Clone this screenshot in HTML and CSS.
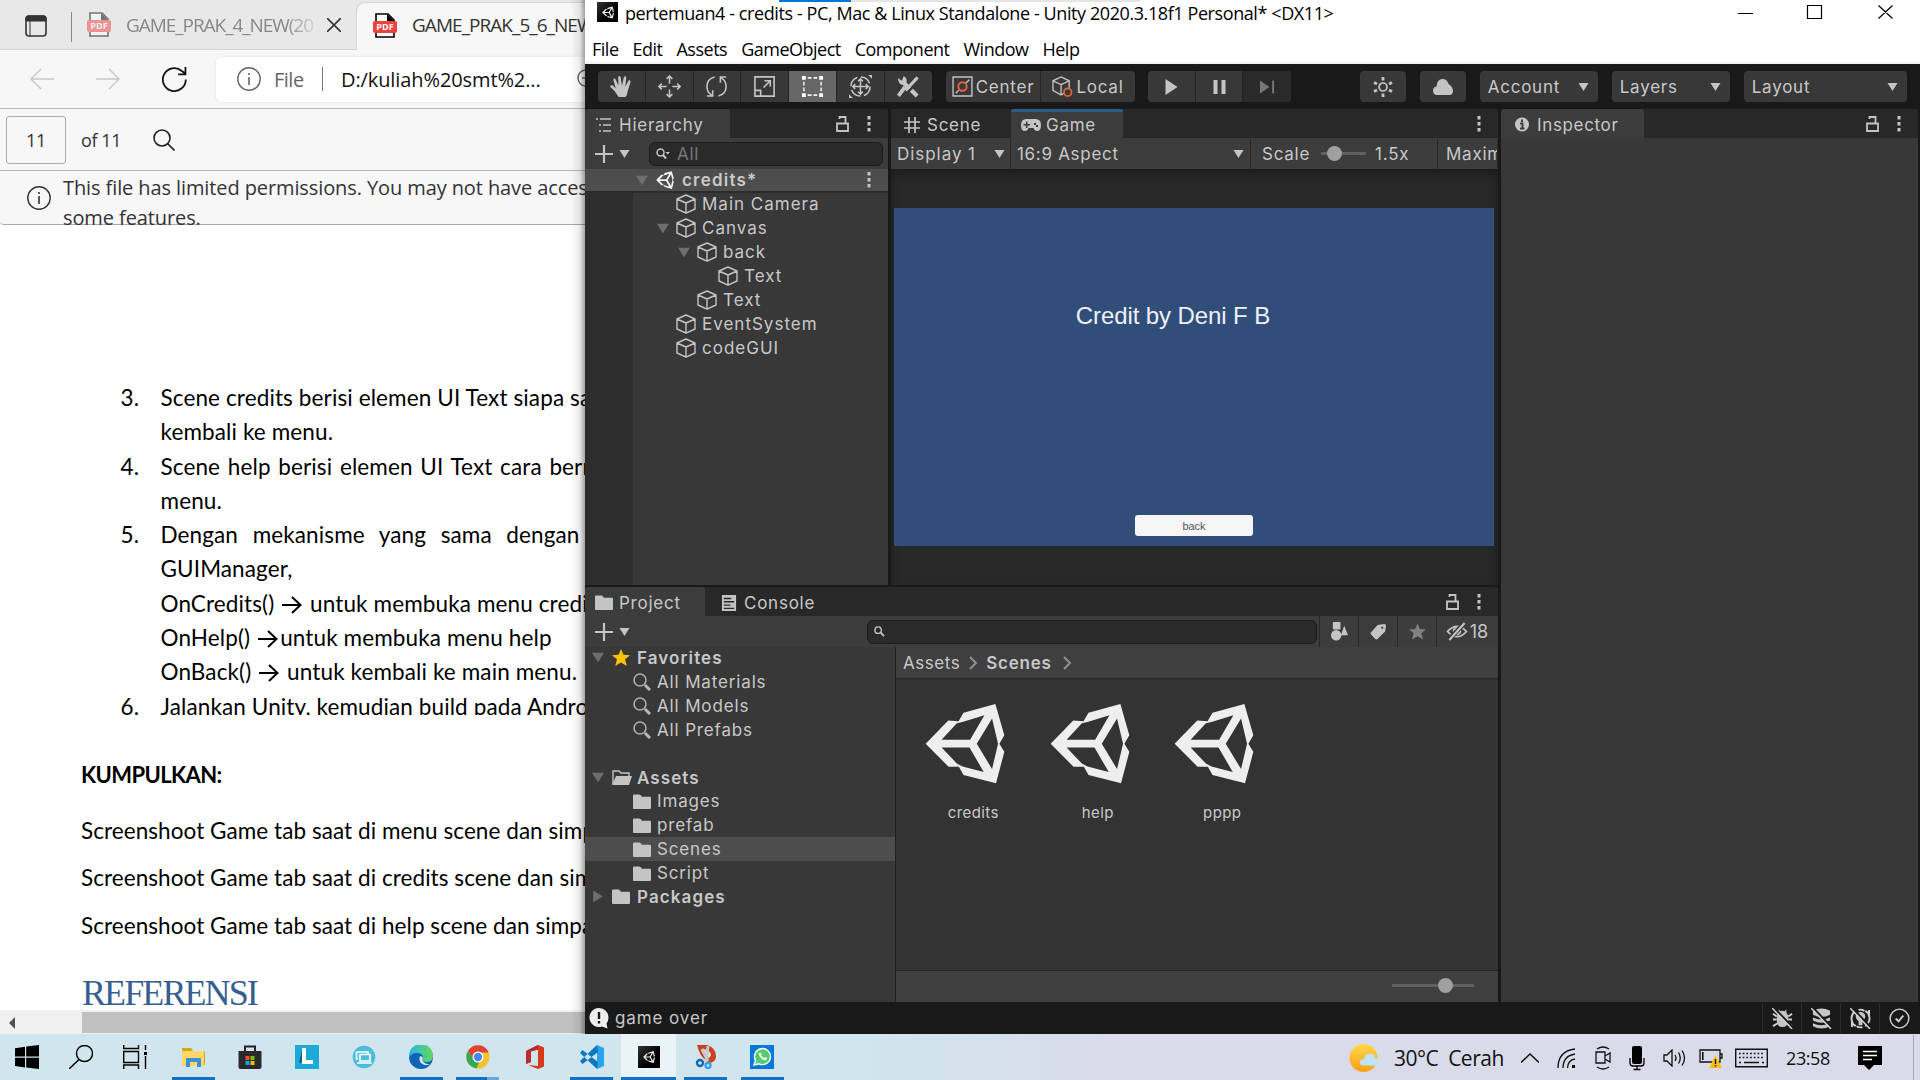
FILE: index.html
```html
<!DOCTYPE html>
<html lang="en">
<head>
<meta charset="utf-8">
<title>pertemuan4 - credits - Unity</title>
<link rel="stylesheet" href="styles.css">
</head>
<body>
<svg class="defs" width="0" height="0">
  <symbol id="unity" viewBox="1036 370 241 242"><path fill-rule="evenodd" d="M1038 492L1106 422L1137 424L1152 398L1248 372L1275 466L1260 492L1275 516L1250 611L1152 586L1138 561L1107 561ZM1086 480H1172L1215 406L1149 426L1132 430ZM1086 503H1170L1213 577L1149 560L1132 551ZM1192 492L1238 416L1256 492L1238 568Z"/></symbol>
  <symbol id="cube" viewBox="0 0 20 20"><path d="M10 1L19 5V15L10 19.2L1 15V5ZM1 5L10 9L19 5M10 9V19" fill="none" stroke="#c4c4c4" stroke-width="1.4" stroke-linejoin="round"/></symbol>
  <symbol id="folder" viewBox="0 0 18 15"><path d="M0 1.5Q0 .5 1 .5H7L9 2.8H17Q18 2.8 18 4V14Q18 15 17 15H1Q0 15 0 14Z"/></symbol>
  <symbol id="tri" viewBox="0 0 10 8"><path d="M0 0H10L5 8Z"/></symbol>
  <symbol id="lock" viewBox="0 0 13 16"><path d="M1 7.5H12V15H1ZM3.5 3V1H9.5V7.5" fill="none" stroke="#c4c4c4" stroke-width="1.8"/></symbol>
  <symbol id="dots" viewBox="0 0 4 16"><path d="M.5 0H3.5V3.5H.5ZM.5 6H3.5V9.5H.5ZM.5 12H3.5V15.5H.5Z"/></symbol>
  <symbol id="mag" viewBox="0 0 18 18"><circle cx="7" cy="7" r="6" fill="none" stroke="#b0b0b0" stroke-width="1.5"/><path d="M12 12L17 17" stroke="#b8b8b8" stroke-width="3"/></symbol>
  <symbol id="pdf" viewBox="0 0 24 25"><path d="M3 1H15L21 7V24H3Z" fill="#fff" stroke="#000" stroke-width="1.6"/><path d="M14 1L21 8H14Z" fill="#000"/><rect x="0" y="8" width="24" height="12" rx="2" fill="#f04040"/><text x="12" y="17.3" font-size="9" font-weight="700" fill="#fff" text-anchor="middle" letter-spacing="0">PDF</text></symbol>
  <symbol id="info" viewBox="0 0 24 24"><circle cx="12" cy="12" r="11.2" fill="none" stroke="currentColor" stroke-width="1.4"/><path d="M12 10V18M12 6V8" stroke="currentColor" stroke-width="1.6"/></symbol>
  <symbol id="crumb" viewBox="0 0 9 14"><path d="M1 1L7 7L1 13" fill="none" stroke="#8f8f8f" stroke-width="2"/></symbol>
</svg>

<div class="desktop">
<section class="browser">
  <header class="tabs">
    <svg class="tab-menu" viewBox="0 0 22 22"><rect x="1" y="1" width="20" height="20" rx="3" fill="none" stroke="#333" stroke-width="1.6"/><path d="M1 3Q1 1 3 1H19Q21 1 21 3V6H1ZM5 6V21" fill="#333" stroke="#333"/></svg>
    <i class="tab-rule"></i>
    <div class="tab idle"><svg class="pdf faded"><use href="#pdf"/></svg><span class="tab-name">GAME_PRAK_4_NEW(20</span>
      <svg class="close" viewBox="0 0 14 14"><path d="M0 0L14 14M14 0L0 14" stroke="#333" stroke-width="1.6"/></svg></div>
    <div class="tab open"><svg class="pdf"><use href="#pdf"/></svg><span>GAME_PRAK_5_6_NEW</span></div>
  </header>
  <div class="nav">
    <svg class="arrow" viewBox="0 0 24 22"><path d="M24 11H1M11 1L1 11L11 21" fill="none" stroke="#c8c8c8" stroke-width="1.5"/></svg>
    <svg class="arrow fwd" viewBox="0 0 24 22"><path d="M0 11H23M13 1L23 11L13 21" fill="none" stroke="#c8c8c8" stroke-width="1.5"/></svg>
    <svg class="reload" viewBox="0 0 24 24"><path d="M22.8 12A11 11 0 1 1 19 3.8L22 6M22.5 0V7H15.5" fill="none" stroke="#111" stroke-width="1.7"/></svg>
    <div class="url"><svg class="info grey"><use href="#info"/></svg><span class="scheme">File</span><i></i><span class="path">D:/kuliah%20smt%2...</span>
      <svg class="zoomer" viewBox="0 0 20 20"><circle cx="9" cy="9" r="8" fill="none" stroke="#666" stroke-width="1.5"/><path d="M5 9H13" stroke="#666" stroke-width="1.5"/></svg></div>
  </div>
  <div class="pdfbar"><span class="page">11</span><span class="of">of 11</span>
    <svg class="find" viewBox="0 0 22 22"><circle cx="9" cy="9" r="8" fill="none" stroke="#222" stroke-width="1.6"/><path d="M14.5 14.5L21.5 21.5" stroke="#222" stroke-width="1.7"/></svg></div>
  <div class="notice"><svg class="info"><use href="#info"/></svg><p>This file has limited permissions. You may not have access<br>some features.</p></div>
  <article class="doc">
    <div class="list">
      <div class="li"><b>3.</b><span class="l1">Scene credits berisi elemen UI Text siapa saja</span></div>
      <div class="li"><b></b><span>kembali ke menu.</span></div>
      <div class="li"><b>4.</b><span class="l4">Scene help berisi elemen UI Text cara bermain</span></div>
      <div class="li"><b></b><span>menu.</span></div>
      <div class="li"><b>5.</b><span class="l5">Dengan mekanisme yang sama dengan</span></div>
      <div class="li"><b></b><span>GUIManager,</span></div>
      <div class="li"><b></b><span>OnCredits() <svg class="to" viewBox="0 0 20 18"><path d="M0 9H18M10 1L18.5 9L10 17" fill="none" stroke="#000" stroke-width="2"/></svg> untuk membuka menu credits</span></div>
      <div class="li"><b></b><span>OnHelp() <svg class="to" viewBox="0 0 20 18"><path d="M0 9H18M10 1L18.5 9L10 17" fill="none" stroke="#000" stroke-width="2"/></svg>untuk membuka menu help</span></div>
      <div class="li"><b></b><span>OnBack() <svg class="to" viewBox="0 0 20 18"><path d="M0 9H18M10 1L18.5 9L10 17" fill="none" stroke="#000" stroke-width="2"/></svg> untuk kembali ke main menu.</span></div>
      <div class="li"><b>6.</b><span>Jalankan Unity, kemudian build pada Android</span></div>
    </div>
    <h3>KUMPULKAN:</h3>
    <p>Screenshoot Game tab saat di menu scene dan simpan</p>
    <p>Screenshoot Game tab saat di credits scene dan simpan</p>
    <p>Screenshoot Game tab saat di help scene dan simpan</p>
    <h2>REFERENSI</h2>
  </article>
  <div class="hscroll"><svg viewBox="0 0 6 12"><path d="M6 0V12L0 6Z" fill="#505050"/></svg><i></i></div>
  <div class="shade"></div>
</section>

<section class="editor">
  <header class="titlebar">
    <div class="peek"><i></i><b></b></div>
    <div class="title"><span class="app"><svg><use href="#unity"/></svg></span><span class="name">pertemuan4 - credits - PC, Mac &amp; Linux Standalone - Unity 2020.3.18f1 Personal* &lt;DX11&gt;</span>
      <svg class="win" viewBox="0 0 155 14"><path d="M0 8.5H15M69.500 .5H83.500V13.500H69.500ZM140.500 .5L154.500 13.500M154.500 .5L140.500 13.500" fill="none" stroke="#000" stroke-width="1.2"/></svg></div>
    <nav class="menu"><span>File</span><span>Edit</span><span>Assets</span><span>GameObject</span><span>Component</span><span>Window</span><span>Help</span></nav>
  </header>

  <div class="toolbar">
    <div class="group tools">
      <span><svg viewBox="0 0 24 24"><path d="M9 23L5 17L0 12Q1 10 3 11L6 14L3.500 5Q4 3 5.500 4L8.800 11L8.500 2Q10 0 11 2L12.500 11L14.500 2Q16 .5 17 2.500L16 12L19.500 5.500Q21.500 5 21.500 7L18.500 17Q18 21 16 23Z" fill="#c4c4c4"/></svg></span>
      <span><svg viewBox="0 0 24 24"><path d="M12 1V9M12 15V23M1 12H9M15 12H23M9 4L12 1L15 4M9 20L12 23L15 20M4 9L1 12L4 15M20 9L23 12L20 15" fill="none" stroke="#c4c4c4" stroke-width="1.6"/></svg></span>
      <span><svg viewBox="0 0 24 24"><path d="M10 2Q2 4 2 12Q2 18 7 21M2 22H8V16M14 22Q22 20 22 12Q22 6 17 3M22 2H16V8" fill="none" stroke="#c4c4c4" stroke-width="1.6"/></svg></span>
      <span><svg viewBox="0 0 24 24"><path d="M2 2H22V22H2ZM2 16H8V22M11 13L18 6M12 6H18V12" fill="none" stroke="#c4c4c4" stroke-width="1.7"/></svg></span>
      <span class="on"><svg viewBox="0 0 24 24"><path d="M3 7V17M21 7V17M7 3H17M7 21H17" stroke="#f0f0f0" stroke-width="1.6" stroke-dasharray="4 2"/><path d="M1 1H5V5H1ZM19 1H23V5H19ZM1 19H5V23H1ZM19 19H23V23H19Z" fill="#fff"/></svg></span>
      <span><svg viewBox="0 0 24 24"><circle cx="12" cy="12" r="10" fill="none" stroke="#c4c4c4" stroke-width="1.6" stroke-dasharray="12 3.700"/><path d="M12 4V20M4 12H20M9.500 6.500L12 4L14.500 6.500M9.500 17.500L12 20L14.500 17.500M6.500 9.500L4 12L6.500 14.500M17.500 9.500L20 12L17.500 14.500" fill="none" stroke="#c4c4c4" stroke-width="1.6"/><path d="M20 0H24V4ZM0 20V24H4Z" fill="#c4c4c4"/></svg></span>
      <span><svg viewBox="0 0 24 24"><path d="M7 8L13 14M15 16L21 22" stroke="#c4c4c4" stroke-width="4.500"/><path d="M21.500 2.500L9 16" stroke="#c4c4c4" stroke-width="3.200"/><path d="M10.500 13L3 23L0 20.500L6.500 11.500Z" fill="#c4c4c4"/><path d="M1 3L5 6L7 1Q11 3 10 8Q7 12 3 9Q1 7 1 3Z" fill="#c4c4c4"/></svg></span>
    </div>
    <div class="group pivot">
      <span><svg viewBox="0 0 20 20"><path d="M1 1H19V19H1ZM3.500 16.500L6.500 13.500M13 7L16.500 3.500" fill="none" stroke="#c4c4c4" stroke-width="1.300"/><circle cx="10" cy="10" r="4" fill="none" stroke="#e8633e" stroke-width="1.800"/></svg>Center</span>
      <span><svg class="wide" viewBox="0 0 22 22"><path d="M9.500 1L18 5V15L9.500 20L1 15V5ZM1 5L9.500 9L18 5M9.500 9V20" fill="none" stroke="#c4c4c4" stroke-width="1.400"/><circle cx="16.500" cy="17" r="4" fill="#383838" stroke="#e8633e" stroke-width="1.800"/></svg>Local</span>
    </div>
    <div class="group play">
      <span><svg viewBox="0 0 14 16"><path d="M1 0L13 8L1 16Z" fill="#c4c4c4"/></svg></span>
      <span><svg viewBox="0 0 14 16"><path d="M1 1H5V15H1ZM9 1H13V15H9Z" fill="#c4c4c4"/></svg></span>
      <span class="off"><svg viewBox="0 0 16 16"><path d="M0 1L10 8L0 15ZM13 1H15V15H13Z" fill="#777"/></svg></span>
    </div>
    <div class="group one cog"><svg viewBox="0 0 20 20"><circle cx="10" cy="10" r="4" fill="none" stroke="#c4c4c4" stroke-width="1.700"/><path d="M10 0V3.500M10 16.500V20M1 5.500L4 7M19 5.500L16 7M1 14.500L4 13M19 14.500L16 13" stroke="#c4c4c4" stroke-width="2.800"/></svg></div>
    <div class="group one"><svg viewBox="0 0 20 16"><path d="M3 16Q0 15 0 11.500Q0 8 3.500 7.500Q4 0 9.500 0Q14 0 15.500 5Q20 8 20 12Q20 15 17 16Z" fill="#c4c4c4"/></svg></div>
    <div class="group drop">Account<svg><use href="#tri"/></svg></div>
    <div class="group drop">Layers<svg><use href="#tri"/></svg></div>
    <div class="group drop layout">Layout<svg><use href="#tri"/></svg></div>
  </div>

  <div class="work">
    <div class="left">
      <div class="upper">
        <section class="hierarchy panel">
          <div class="bar"><span class="ptab h"><svg class="ic16" viewBox="0 0 16 16"><path d="M0 2H2M4 2H15M3 8H5M7 8H15M3 14H5M7 14H15" stroke="#c4c4c4" stroke-width="1.600"/></svg>Hierarchy</span><svg class="lock"><use href="#lock"/></svg><svg class="dots"><use href="#dots"/></svg></div>
          <div class="sub"><svg class="plus" viewBox="0 0 18 18"><path d="M9 0V18M0 9H18" stroke="#c4c4c4" stroke-width="2.200"/></svg><svg class="tri"><use href="#tri"/></svg>
            <div class="search"><svg viewBox="0 0 14 12"><circle cx="4.500" cy="4.500" r="3.500" fill="none" stroke="#c4c4c4" stroke-width="1.500"/><path d="M7 7L10 10.500" stroke="#c4c4c4" stroke-width="2"/><path d="M9.500 4H14L11.700 6.500Z" fill="#c4c4c4"/></svg>All</div></div>
          <div class="scene"><svg class="tw"><use href="#tri"/></svg><svg class="logo"><use href="#unity"/></svg><b>credits*</b><svg class="dots"><use href="#dots"/></svg></div>
          <div class="tree">
            <div class="row d1"><svg class="cube"><use href="#cube"/></svg>Main Camera</div>
            <div class="row d1"><svg class="tw"><use href="#tri"/></svg><svg class="cube"><use href="#cube"/></svg>Canvas</div>
            <div class="row d2"><svg class="tw"><use href="#tri"/></svg><svg class="cube"><use href="#cube"/></svg>back</div>
            <div class="row d3"><svg class="cube"><use href="#cube"/></svg>Text</div>
            <div class="row d2"><svg class="cube"><use href="#cube"/></svg>Text</div>
            <div class="row d1"><svg class="cube"><use href="#cube"/></svg>EventSystem</div>
            <div class="row d1"><svg class="cube"><use href="#cube"/></svg>codeGUI</div>
          </div>
        </section>
        <section class="game panel">
          <div class="bar"><span class="ptab plain"><svg class="ic16" viewBox="0 0 16 16"><path d="M5 0V16M11 0V16M0 5H16M0 11H16" stroke="#c4c4c4" stroke-width="1.700"/></svg>Scene</span><span class="ptab lit"><svg class="pad" viewBox="0 0 20 12"><path fill-rule="evenodd" d="M5.500 0H14.500Q20 0 20 6Q20 12 16 12Q13.500 12 12.500 9H7.500Q6.500 12 4 12Q0 12 0 6Q0 0 5.500 0ZM5 2.500V5H2.500V6.500H5V9H6.500V6.500H9V5H6.500V2.500ZM13 4V6H15V4ZM15 6V8H17V6Z"/></svg>Game</span><svg class="dots"><use href="#dots"/></svg></div>
          <div class="sub opts"><span class="o1">Display 1<svg class="tri"><use href="#tri"/></svg></span><span class="o2">16:9 Aspect<svg class="tri"><use href="#tri"/></svg></span><span class="o3">Scale<i class="slide"></i>1.5x</span><span class="o4">Maximize</span></div>
          <div class="view"><div class="canvas"><p>Credit by Deni F B</p><button>back</button></div></div>
        </section>
      </div>
      <section class="project panel">
        <div class="bar"><span class="ptab p"><svg class="fold"><use href="#folder"/></svg>Project</span><span class="ptab plain c"><svg class="ic16" viewBox="0 0 15 17"><path fill-rule="evenodd" d="M0 0H15V17H0ZM2 3V4.500H10V3ZM2 6.500V8H13V6.500ZM2 10V11.500H9V10ZM2 13.500V15H13V13.500Z"/></svg>Console</span><svg class="lock"><use href="#lock"/></svg><svg class="dots"><use href="#dots"/></svg></div>
        <div class="sub"><svg class="plus" viewBox="0 0 18 18"><path d="M9 0V18M0 9H18" stroke="#c4c4c4" stroke-width="2.200"/></svg><svg class="tri"><use href="#tri"/></svg>
          <div class="search big"><svg viewBox="0 0 12 12"><circle cx="4.500" cy="4.500" r="3.500" fill="none" stroke="#c4c4c4" stroke-width="1.500"/><path d="M7 7L11 11" stroke="#c4c4c4" stroke-width="2"/></svg></div>
          <span class="filt"><svg viewBox="0 0 18 20"><path d="M2 0H10V8H2ZM14 4L18 14H10.500Z"/><circle cx="5.500" cy="14" r="5.500"/></svg></span>
          <span class="filt"><svg viewBox="0 0 18 18"><path fill-rule="evenodd" d="M8 2L15 1Q17 1 17 3L16 9L8 17Q7 18 5.500 17L1 12Q0 11 1 10ZM12 4V6H14V4Z"/></svg></span>
          <span class="filt star"><svg viewBox="0 0 20 19"><path d="M10 0L12.800 6.500L20 7L14.500 11.500L16.500 19L10 15L3.500 19L5.500 11.500L0 7L7.200 6.500Z"/></svg></span>
          <span class="filt count"><svg viewBox="0 0 22 20"><path d="M1 10Q11 -1 21 10Q11 21 1 10Z" fill="none" stroke="#c4c4c4" stroke-width="1.800"/><circle cx="11" cy="9.500" r="4.500"/><path d="M2 19L19 1" stroke="#3c3c3c" stroke-width="5"/><path d="M3 19L19 1" stroke="#c4c4c4" stroke-width="2.200"/></svg>18</span>
        </div>
        <div class="split">
          <div class="folders">
            <div class="f top"><svg class="tw"><use href="#tri"/></svg><svg class="fav" viewBox="0 0 20 19"><path d="M10 0L12.800 6.500L20 7L14.500 11.500L16.500 19L10 15L3.500 19L5.500 11.500L0 7L7.200 6.500Z" fill="#ffc107"/></svg><b>Favorites</b></div>
            <div class="f"><svg class="mag"><use href="#mag"/></svg>All Materials</div>
            <div class="f"><svg class="mag"><use href="#mag"/></svg>All Models</div>
            <div class="f"><svg class="mag"><use href="#mag"/></svg>All Prefabs</div>
            <div class="f top gap"><svg class="tw"><use href="#tri"/></svg><svg class="fopen" viewBox="0 0 20 15"><path d="M1 14V1H7L9 3H17V6" fill="none" stroke="#c4c4c4" stroke-width="1.400"/><path d="M4 6H20L17 15H0Z"/></svg><b>Assets</b></div>
            <div class="f"><svg class="fold"><use href="#folder"/></svg>Images</div>
            <div class="f"><svg class="fold"><use href="#folder"/></svg>prefab</div>
            <div class="f sel"><svg class="fold"><use href="#folder"/></svg>Scenes</div>
            <div class="f"><svg class="fold"><use href="#folder"/></svg>Script</div>
            <div class="f top"><svg class="tw shut"><use href="#tri"/></svg><svg class="fold"><use href="#folder"/></svg><b>Packages</b></div>
          </div>
          <div class="files">
            <div class="crumbs">Assets<svg><use href="#crumb"/></svg><b>Scenes</b><svg><use href="#crumb"/></svg></div>
            <div class="grid"><figure><svg><use href="#unity"/></svg><figcaption>credits</figcaption></figure><figure><svg><use href="#unity"/></svg><figcaption>help</figcaption></figure><figure><svg><use href="#unity"/></svg><figcaption>pppp</figcaption></figure></div>
            <div class="foot"><i class="slide size"></i></div>
          </div>
        </div>
      </section>
    </div>
    <section class="inspector panel">
      <div class="bar"><span class="ptab i"><svg class="ibub" viewBox="0 0 14 14"><circle cx="7" cy="7" r="7"/><path d="M7 2V4.500M5 6H7.500V11M5 11H9.500" fill="none" stroke="#3c3c3c" stroke-width="1.900"/></svg>Inspector</span><svg class="lock"><use href="#lock"/></svg><svg class="dots"><use href="#dots"/></svg></div>
      <div class="empty"></div>
    </section>
  </div>

  <footer class="status">
    <svg class="bang" viewBox="0 0 20 21"><path d="M10 0A9.500 9.500 0 0 1 19.500 9.500Q19.500 13 17.500 15.500L18.500 20.500L13 18.500A9.500 9.500 0 1 1 10 0Z" fill="#eee"/><path d="M10 4V11M10 13V15.500" stroke="#191919" stroke-width="2.400"/></svg>game over
    <span class="st first"><svg viewBox="0 0 22 22"><path d="M11 3Q17 3 17 12Q17 20 11 20Q5 20 5 12Q5 3 11 3ZM7 1L9 4H13L15 1V5H7Z"/><path d="M1 6L5 9M1 12H5M1 19L6 16M21 6L17 9M21 12H17M21 19L16 16" stroke="#d0d0d0" stroke-width="2"/><path d="M2.500 0L23.500 22" stroke="#191919" stroke-width="2"/><path d="M0 0L21 22" stroke="#d0d0d0" stroke-width="1.600"/></svg></span>
    <span class="st"><svg viewBox="0 0 22 22"><path d="M2 3Q11 -2 20 3V7Q11 12 2 7ZM2 10Q11 14 20 10V13Q11 18 2 13ZM2 16Q11 20 20 16V19Q11 24 2 19Z"/><path d="M2.500 0L23.500 22" stroke="#191919" stroke-width="2"/><path d="M0 0L21 22" stroke="#d0d0d0" stroke-width="1.600"/></svg></span>
    <span class="st"><svg viewBox="0 0 22 22"><path d="M3 16A9.500 9.500 0 0 1 6 3M19 6A9.500 9.500 0 0 1 16 19M16 3L20 6V2M6 19L2 16V20M9 2Q12 1 15 3M13 20Q9 21 7 19" fill="none" stroke="#d0d0d0" stroke-width="2"/><path d="M11 4Q16 5 16 9Q16 12 13 14V18H9V14Q6 12 6 9Q6 5 11 4Z"/><path d="M2.500 0L23.500 22" stroke="#191919" stroke-width="2"/><path d="M0 0L21 22" stroke="#d0d0d0" stroke-width="1.600"/></svg></span>
    <span class="st"><svg viewBox="0 0 22 22"><circle cx="11" cy="11" r="9.800" fill="none" stroke="#d0d0d0" stroke-width="1.500"/><path d="M7 11L10 14L15 8" fill="none" stroke="#d0d0d0" stroke-width="2"/></svg></span>
  </footer>
</section>
</div>

<footer class="taskbar">
  <div class="apps">
    <span class="sys"><svg viewBox="0 0 24 24"><path d="M0 3.200L10 1.800V11.500H0ZM11.200 1.600L24 0V11.500H11.200ZM0 12.700H10V22.400L0 21ZM11.200 12.700H24V24L11.200 22.500Z"/></svg></span>
    <span class="sys"><svg viewBox="0 0 24 24"><circle cx="15.500" cy="8.500" r="8" fill="none" stroke="#000" stroke-width="1.400"/><path d="M10 14.500L0 24" stroke="#000" stroke-width="1.500"/></svg></span>
    <span class="sys views"><svg viewBox="0 0 24 24"><path d="M.7 0V3.500H15.500V0M.7 24V20H15.500V24M.7 6.500H15.500V17.500H.7ZM22.500 0V5M22.500 11V24" fill="none" stroke="#000" stroke-width="1.400"/><path d="M21 7H24V10H21Z"/></svg></span>
    <span class="run"><svg viewBox="0 0 24 24"><path d="M1 3H10L12 6H24V20H1Z" fill="#d9a31a"/><path d="M1 6H23V21H1Z" fill="#ffd869"/><path d="M5 22V14Q5 13 6 13H19Q20 13 20 14V22H16V17H9V22Z" fill="#3b91d4"/></svg></span>
    <span><svg viewBox="0 0 24 24"><path d="M7 7V1.500H17V7" fill="none" stroke="#222" stroke-width="2"/><path d="M.5 6H23.500V22Q23.500 24 21.500 24H2.500Q.5 24 .5 22Z" fill="#2a2a2a"/><path d="M7.500 11H11.500V15H7.500Z" fill="#f25022"/><path d="M12.500 11H16.500V15H12.500Z" fill="#7fba00"/><path d="M7.500 16H11.500V20H7.500Z" fill="#00a4ef"/><path d="M12.500 16H16.500V20H12.500Z" fill="#ffb900"/></svg></span>
    <span><svg viewBox="0 0 24 24"><path d="M0 0H24V24H0Z" fill="#1caad6"/><path d="M7 5L4 18L8 17Z" fill="#045f8a"/><path d="M7 3H11V15H18V19H7Z" fill="#fff"/></svg></span>
    <span><svg viewBox="0 0 24 24"><circle cx="12" cy="12" r="11.300" fill="#4bbcdc"/><path d="M4.500 7H16V9M4.500 7V14H6M8 9.500H18V16H8ZM5 18H20" fill="none" stroke="#fff" stroke-width="1.700"/></svg></span>
    <span class="run"><svg viewBox="0 0 24 24"><defs><linearGradient id="eg"><stop offset="0" stop-color="#2bb5ea"/><stop offset="1" stop-color="#63d957"/></linearGradient></defs><circle cx="12" cy="12" r="12" fill="#1163b8"/><path d="M0 11A12 12 0 0 1 24 11Q24 17 17 17Q13 17 14 14Q15 8 8 8Q2 8 0 13Z" fill="url(#eg)"/><path d="M11.500 11Q9 14 12 18Q16 22 22 18.500Q17 20 14.500 17Q12.500 15 14 13Q13 11 11.500 11Z" fill="#d0e5ee"/></svg></span>
    <span class="run multi"><svg viewBox="0 0 24 24"><circle cx="12" cy="12" r="11.500" fill="#f5c12e"/><path d="M2 6A11.500 11.500 0 0 1 22 6L22.500 7.500H12L7 14Z" fill="#de4536"/><path d="M2 6L8 15L13 17L10.500 23.400A11.500 11.500 0 0 1 2 6Z" fill="#36a852"/><circle cx="12" cy="12" r="5.500" fill="#fff"/><circle cx="12" cy="12" r="4.200" fill="#4688f1"/></svg></span>
    <span><svg viewBox="0 0 24 24"><path d="M3 6L15 0L21 2.500V21.500L15 24L5 20L15 21V4.500L8 6.500V17L3 19Z" fill="#d8391a"/><path d="M3 6L15 0V4.500L8 6.500V17L3 19Z" fill="#b82b35"/></svg></span>
    <span class="run"><svg viewBox="0 0 24 24"><path d="M17 0L24 3V21L17 24Z" fill="#2ba4ee"/><path d="M17 0L0 16L2.500 19L18 7ZM17 24L0 8L2.500 5L18 17Z" fill="#0878bf"/></svg></span>
    <span class="run live"><i class="app"><svg><use href="#unity"/></svg></i></span>
    <span class="run"><svg viewBox="0 0 24 24"><path fill-rule="evenodd" d="M3 0H13Q22 3 22 11Q22 17 15 18L12 15Q6 12 3 0ZM7 4Q8 9 13 13Q17 13 17 9Q15 4 7 4Z" fill="#c8431a"/><path d="M8 4L14 16M14 1L12 17" stroke="#c8c8c8" stroke-width="3"/><circle cx="6" cy="18" r="3" fill="none" stroke="#1769b5" stroke-width="2.400"/><circle cx="14" cy="20.500" r="2.500" fill="none" stroke="#38a0e5" stroke-width="2.400"/></svg></span>
    <span class="run"><svg viewBox="0 0 24 24"><path d="M0 0H24V24H0Z" fill="#0578d8"/><path d="M4 20L5.500 15.500A8 8 0 1 1 9 18.800Z" fill="#55cd6c" stroke="#fff" stroke-width="1.400"/><path d="M9 8Q8 10 11 13Q14 16 16 15L17 13L14.500 12L13.500 13L11 10.500L11.500 9.500L10.500 7.500Z" fill="#fff"/></svg></span>
  </div>
  <div class="tray">
    <svg class="sun" viewBox="0 0 31 29"><defs><linearGradient id="sg" x2="0" y2="1"><stop offset="0" stop-color="#ffd84a"/><stop offset="1" stop-color="#f99f18"/></linearGradient></defs><circle cx="14.500" cy="14.500" r="14" fill="url(#sg)"/><path d="M15 22Q10 22 11 18Q12 15 15 16Q16 9 22 10Q26 11 26 15Q31 15 30 19Q29 22 26 22Z" fill="#bfe3fa"/></svg>
    <span class="temp">30°C&nbsp; Cerah</span>
    <svg class="up" viewBox="0 0 18 10"><path d="M0 9.500L9 1L18 9.500" fill="none" stroke="#111" stroke-width="1.500"/></svg>
    <svg class="wifi" viewBox="0 0 20 20"><path d="M1 20Q1 3 18 1M6 20Q6 8 18 6M10.500 20Q11 12 18 11" fill="none" stroke="#111" stroke-width="1.300"/><path d="M15 17H18V20H15Z"/></svg>
    <svg class="cam" viewBox="0 0 18 24"><path d="M2 6H11V17H2ZM11 10L16 7V16L11 13M3 3Q9 -1 15 3M3 21Q9 25 15 21" fill="none" stroke="#111" stroke-width="1.300"/></svg>
    <svg class="mic" viewBox="0 0 16 24"><rect x="3" width="10" height="18" rx="2"/><path d="M1 12V17Q1 20 4 20H12Q15 20 15 17V12M8 20V23M4.500 23.500H11.500" fill="none" stroke="#000" stroke-width="1.300"/></svg>
    <svg class="vol" viewBox="0 0 23 18"><path d="M1 6H4L9 1V17L4 12H1ZM12 6Q14 9 12 12M15.500 3.500Q19 9 15.500 14.500M19 1.500Q24 9 19 16.500" fill="none" stroke="#111" stroke-width="1.300"/></svg>
    <svg class="bat" viewBox="0 0 24 20"><path d="M1 2H21V14H1ZM21 6H23V10H21" fill="none" stroke="#111" stroke-width="1.300"/><path d="M3 4H4.500V12H3Z"/><path d="M16.500 7L23 20H10Z" fill="#fdbf14"/><path d="M16.500 11V16M16.500 17V18.500" stroke="#000" stroke-width="1.300"/></svg>
    <svg class="kbd" viewBox="0 0 33 19"><path d="M.7 .7H32.300V18.300H.7Z" fill="none" stroke="#111" stroke-width="1.400"/><path d="M4 5H29M4 9H29" stroke="#111" stroke-width="1.500" stroke-dasharray="1.700 2"/><path d="M4 14H6M9 14H24M27 14H29" stroke="#111" stroke-width="1.500"/></svg>
    <span class="time">23:58</span>
    <svg class="note" viewBox="0 0 24 24"><path d="M0 0H24V19H16L11 24L6 19H0Z"/><path d="M5 5.500H19M5 9.500H19M5 13.500H14" stroke="#fff" stroke-width="1.300"/></svg>
    <i class="edge"></i>
  </div>
</footer>
</body>
</html>
```
FILE: styles.css
```css
* { box-sizing: border-box; }
body { margin: 0; width: 1920px; height: 1080px; overflow: hidden; font-family: "Open Sans", "Noto Sans", sans-serif; white-space: nowrap; }
svg { display: block; flex: none; }
p, h2, h3, figure { margin: 0; }
.defs { position: absolute; }
.desktop { display: flex; height: 1034px; }

/* Browser window */
.browser { position: relative; width: 585px; overflow: hidden; display: flex; flex-direction: column; background: #fff; color: #333; }
.shade { position: absolute; right: 0; top: 0; width: 14px; height: 100%; background: linear-gradient(90deg, transparent, rgba(0,0,0,.08) 60%, rgba(0,0,0,.35)); }
.tabs { height: 50px; display: flex; background: #e8e8e8; border-bottom: 1px solid #d6d6d6; font-size: 19px; }
.tab-menu { width: 22px; height: 22px; margin: 15px 24px 0 25px; }
.tab-rule { width: 1px; height: 30px; margin-top: 12px; background: #888; flex: none; }
.tab { display: flex; align-items: center; flex: none; }
.idle { width: 285px; padding-left: 15px; color: #888; }
.pdf { width: 24px; height: 25px; margin-right: 15px; }
.faded { opacity: .5; }
.tab-name { width: 188px; overflow: hidden; letter-spacing: -1.050px; -webkit-mask-image: linear-gradient(90deg, #000 85%, rgba(0,0,0,.2)); mask-image: linear-gradient(90deg, #000 85%, rgba(0,0,0,.2)); }
.close { width: 14px; height: 14px; margin-left: 13px; }
.open { width: 240px; height: 47px; margin-top: 3px; padding: 0 0 3px 16px; background: #f7f7f7; border-radius: 8px 0 0 0; letter-spacing: -.95px; box-shadow: 0 0 2px #aaa; }
.nav { height: 59px; display: flex; align-items: center; background: #f7f7f7; border-bottom: 1px solid #b8b8b8; }
.arrow { width: 24px; height: 22px; margin-left: 30px; }
.fwd { margin-left: 42px; }
.reload { width: 25px; height: 25px; margin-left: 42px; }
.url { flex: 1; height: 45px; margin-left: 29px; padding-left: 21px; display: flex; align-items: center; background: #fff; border-radius: 6px 0 0 6px; box-shadow: 0 0 3px #ddd; font-size: 20px; overflow: hidden; }
.url > * { flex: none; }
.url i { width: 1px; height: 24px; margin: 0 18px 0 17px; background: #777; }
.info { width: 24px; height: 24px; }
.grey { color: #666; }
.scheme { width: 31px; margin-left: 13px; color: #666; letter-spacing: -.5px; }
.path { width: 200px; color: #111; letter-spacing: -.1px; }
.zoomer { width: 20px; height: 20px; margin-left: 36px; }
.pdfbar { height: 62px; display: flex; align-items: center; background: #f7f7f7; border-bottom: 1px solid #b8b8b8; font-size: 18px; letter-spacing: -.4px; }
.page { width: 60px; height: 48px; margin-left: 6px; border: 1px solid #aaa; border-radius: 3px; text-align: center; line-height: 46px; }
.of { width: 87px; padding-left: 15px; }
.find { width: 22px; height: 22px; }
.notice { height: 54px; padding-left: 27px; display: flex; align-items: center; gap: 12px; background: #f7f7f7; border-bottom: 1px solid #aaa; border-radius: 0 0 0 4px; font-size: 20px; line-height: 30px; letter-spacing: -.1px; }
.notice p { height: 54px; padding-top: 2px; }
.doc { height: 785px; overflow: hidden; color: #000; font-family: Lato, sans-serif; font-size: 22.500px; letter-spacing: .06px; }
.list { height: 490px; padding: 154px 0 0 120.500px; overflow: hidden; letter-spacing: .12px; }
.li { height: 34.300px; display: flex; line-height: 38px; }
.li b { width: 40px; flex: none; font-weight: 400; }
.li span { display: flex; white-space: pre; }
.l4 { word-spacing: 1.800px; }
.l5 { word-spacing: 8.700px; }
.to { width: 20px; height: 18px; margin: 11px 2px 0; }
.doc h3 { margin: 43px 0 0 81px; font-size: 22px; line-height: 34px; letter-spacing: -.6px; }
.doc h3 + p { margin-top: 15px; }
.doc p { margin-left: 81px; height: 47.400px; line-height: 47px; }
.doc h2 { margin: 20px 0 0 82px; font: 400 36px/48px "Liberation Serif", serif; color: #365f91; letter-spacing: -1.900px; }
.hscroll { height: 24px; display: flex; align-items: center; padding: 2px 0 1px; background: #f0f0f0; }
.hscroll svg { width: 6px; height: 12px; margin: 0 67px 0 9px; }
.hscroll i { flex: 1; height: 21px; background: #c0c0c0; }

/* Editor window */
.editor { width: 1335px; height: 1034px; display: flex; flex-direction: column; background: #191919; font-family: Inter, sans-serif; font-size: 17px; letter-spacing: .75px; color: #c8c8c8; }
.editor svg { fill: #c4c4c4; }
.titlebar { height: 64px; background: #fff; color: #000; border-bottom: 2px solid #f0f0f0; font-family: "Open Sans", sans-serif; font-size: 18px; letter-spacing: -.5px; }
.peek { height: 2px; display: flex; padding-left: 194px; }
.peek i { width: 72px; background: #0078d7; }
.peek b { width: 290px; background: #e5e5e5; }
.title { height: 32px; display: flex; padding-left: 12px; line-height: 22px; letter-spacing: -.41px; }
.app { width: 21px; height: 20px; display: flex; align-items: center; justify-content: center; background: linear-gradient(135deg, #333, #000 60%); }
.editor .app svg, .app svg { width: 12px; height: 13px; fill: #eee; }
.name { width: 1113px; margin-left: 7px; }
.win { width: 155px; height: 14px; margin-top: 3px; }
.menu { display: flex; gap: 14px; padding-left: 7px; line-height: 31px; }
.toolbar { height: 45px; display: flex; padding: 7px 0 7px 13px; }
.group { height: 31px; display: flex; align-items: center; background: #383838; border-radius: 4px; overflow: hidden; }
.group span { height: 31px; display: flex; align-items: center; justify-content: center; border-right: 1px solid #242424; }
.group span:last-child { border: 0; }
.tools span { width: 47.750px; }
.tools svg { width: 23px; height: 23px; }
.tools .on { background: #676767; }
.pivot { margin-left: 14px; }
.pivot span { width: 94.500px; gap: 3px; }
.pivot svg { width: 21px; height: 21px; }
.play { margin-left: 13px; }
.play span { width: 47.500px; }
.play svg { width: 15px; height: 16px; }
.play .off { background: #2a2a2a; }
.one { width: 46px; justify-content: center; margin-left: 14px; }
.one svg { width: 20px; height: 20px; }
.cog { margin-left: 69px; }
.drop { width: 118px; margin-left: 14px; padding: 0 9px 0 8px; justify-content: space-between; }
.drop svg, .tri { width: 11px; height: 8px; }
.layout { width: 163px; }

.work { height: 893px; display: flex; gap: 3px; }
.left { width: 913px; display: flex; flex-direction: column; gap: 2px; }
.upper { height: 476px; display: flex; gap: 3px; }
.panel { display: flex; flex-direction: column; background: #383838; border-radius: 3px 3px 0 0; overflow: hidden; }
.hierarchy { width: 303px; }
.bar { height: 29px; flex: none; display: flex; align-items: center; background: #282828; }
.ptab { height: 29px; display: flex; align-items: center; background: #3c3c3c; border-radius: 3px 3px 0 0; padding-top: 2px; }
.plain { background: none; }
.ic16 { width: 16px; height: 16px; }
.h { width: 145px; padding-left: 11px; gap: 7px; }
.lock { width: 13px; height: 16px; margin-left: auto; }
.dots { width: 4px; height: 16px; margin: 0 17px 0 18px; }
.sub { height: 31px; flex: none; display: flex; align-items: center; background: #3c3c3c; }
.plus { width: 18px; height: 18px; margin: 0 6px 0 10px; }
.search { width: 234px; height: 24px; margin-left: 19px; padding-left: 6px; display: flex; align-items: center; gap: 7px; background: #2a2a2a; border: 1px solid #1c1c1c; border-radius: 6px; color: #777; }
.search svg { width: 14px; height: 12px; }
.scene { height: 24px; flex: none; display: flex; align-items: center; padding-left: 51px; background: #4d4d4d; border-bottom: 2px solid #2b2b2b; }
.scene b { margin-left: 8px; letter-spacing: 1.200px; }
.editor b { font-weight: 600; }
.scene .dots { margin-left: auto; }
.editor .tw { width: 12px; height: 11px; fill: #6e6e6e; }
.logo { width: 18px; height: 18px; margin-left: 8px; }
.editor .logo { fill: #eee; }
.tree { flex: 1; margin-top: -1px; border-left: 48px solid #2d2d2d; letter-spacing: 1px; }
.row { height: 24px; display: flex; align-items: center; padding-left: 43px; }
.d2 { padding-left: 64px; }
.d3 { padding-left: 85px; }
.row .tw { margin: 0 7px 0 -19px; }
.cube { width: 20px; height: 20px; margin-right: 6px; }
.game { width: 607px; background: #282828; }
.game .plain { width: 120px; padding-left: 13px; gap: 7px; }
.lit { width: 112px; padding-left: 10px; gap: 5px; border-top: 3px solid #2c5d87; padding-top: 0; }
.pad { width: 20px; height: 12px; }
.game .bar .dots { margin: 0 17px 0 auto; }
.opts span { height: 30px; display: flex; align-items: center; border-right: 1px solid #282828; flex: none; }
.opts .tri { margin-left: auto; }
.o1 { width: 120px; padding: 0 5px 0 6px; letter-spacing: .95px; }
.o2 { width: 240px; padding: 0 6px; letter-spacing: .7px; }
.o3 { width: 187px; padding-left: 11px; }
.o4 { width: 60px; padding-left: 8px; overflow: hidden; }
.slide { position: relative; width: 45px; height: 3px; margin: 0 9px 0 11px; background: #606060; }
.slide::after { content: ""; position: absolute; left: 6px; top: -6px; width: 15px; height: 15px; border-radius: 50%; background: #a0a0a0; }
.view { flex: 1; padding: 39px 4px 0 3px; box-shadow: inset 0 5px 8px #1c1c1c; }
.canvas { height: 338px; display: flex; flex-direction: column; align-items: center; background: #314d79; }
.canvas p { margin: 92px 42px 0 0; font: 24px/32px "Liberation Sans", sans-serif; letter-spacing: -.1px; color: #eef2f8; }
.canvas button { width: 118px; height: 21px; margin-top: 183px; border: 0; padding: 0; border-radius: 3px; background: #f5f5f5; color: #555; font: 11px "Liberation Sans", sans-serif; }

.project { flex: 1; }
.p { width: 120px; padding-left: 10px; gap: 6px; }
.fold { width: 18px; height: 15px; }
.c { padding-left: 16px; gap: 7px; }
.project .bar .dots { margin-right: 17px; }
.big { width: 450px; margin-left: 237px; margin-right: 2px; }
.big svg { width: 11px; height: 11px; }
.filt { width: 39px; height: 31px; display: flex; align-items: center; justify-content: center; border-left: 1px solid #282828; }
.filt svg { width: 17px; height: 19px; }
.editor .star svg { fill: #808080; }
.count { width: 61px; gap: 2px; letter-spacing: 0; font-size: 18px; }
.count svg { width: 22px; }
.split { flex: 1; display: flex; }
.folders { width: 311px; border-right: 1px solid #222; letter-spacing: .85px; }
.f { height: 23.900px; display: flex; align-items: center; padding-left: 48px; gap: 6px; }
.f:first-child { margin-top: -1px; }
.f b { letter-spacing: 1.100px; }
.top { padding-left: 7px; gap: 8px; }
.top b { margin-left: -1px; }
.shut { transform: rotate(-90deg); }
.gap { margin-top: 24px; }
.sel { background: #4d4d4d; }
.mag { width: 18px; height: 18px; }
.fav { width: 18px; height: 17px; }
.fopen { width: 20px; height: 15px; margin-right: -2px; }
.files { flex: 1; display: flex; flex-direction: column; background: #333; }
.crumbs { height: 32px; display: flex; align-items: center; padding-left: 7px; gap: 9px; background: #3f3f3f; border-bottom: 1px solid #252525; letter-spacing: .55px; }
.crumbs svg { width: 9px; height: 14px; }
.crumbs b { letter-spacing: .75px; margin: 0 2px 0 -1px; }
.grid { flex: 1; display: flex; padding: 24px 0 0 14.500px; }
figure { width: 124.500px; display: flex; flex-direction: column; align-items: center; }
figure svg { width: 80px; height: 81px; margin-right: 15px; }
.editor figure svg { fill: #eee; }
figcaption { margin: 17px 0 0 1px; font-size: 15px; line-height: 24px; letter-spacing: .4px; }
.foot { height: 32px; padding: 13px 24px 0 0; background: #3f3f3f; border-top: 1px solid #252525; }
.size { display: block; width: 82px; margin: 0 0 0 auto; }
.size::after { left: 46px; }
.inspector { width: 417px; }
.i { width: 143px; padding-left: 14px; gap: 8px; letter-spacing: .65px; }
.ibub { width: 14px; height: 15px; }
.inspector .dots { margin-right: 17px; }
.status { height: 32px; display: flex; align-items: center; padding: 0 2px 0 4px; letter-spacing: .9px; }
.bang { width: 20px; height: 21px; margin-right: 6px; }
.st { width: 39px; height: 30px; display: flex; align-items: center; justify-content: center; border-left: 1px solid #2c2c2c; }
.first { margin-left: auto; }
.st svg { width: 21px; height: 21px; }

/* Taskbar */
.taskbar { height: 46px; display: flex; justify-content: space-between; background: linear-gradient(90deg, #d0e5ee 0, #d0e5ee 45%, #d9dbe9 58%, #dadbea); color: #111; }
.apps { display: flex; }
.apps > span { width: 56.900px; height: 46px; display: flex; justify-content: center; padding-top: 11px; border-bottom: 3px solid transparent; }
.apps > .sys { width: 54px; }
.apps > .views { margin-right: 3px; }
.apps > span svg { width: 24px; height: 24px; }
.apps > .run { background: linear-gradient(#0b74c9, #0b74c9) center 43px / 43px 3px no-repeat border-box; }
.apps > .multi { background: linear-gradient(90deg, #0b74c9 73%, #6aa6d8 73%) center 43px / 43px 3px no-repeat border-box; }
.apps > .live { width: 55px; margin: 0 1px; background: #e9f3f8; border-bottom: 3px solid #0b74c9; padding-top: 12px; }
.apps .app { width: 22px; height: 22px; }
.apps > span .app svg { width: 12px; height: 12px; }
.tray { width: 571px; display: flex; align-items: center; padding-top: 2px; }
.sun { width: 31px; height: 30px; }
.temp { width: 127px; margin-left: 14px; font-size: 21px; letter-spacing: -.5px; }
.up { width: 18px; height: 10px; }
.wifi { width: 20px; height: 20px; margin-left: 18px; }
.cam { width: 18px; height: 24px; margin-left: 17px; }
.mic { width: 16px; height: 26px; margin-left: 17px; }
.vol { width: 23px; height: 18px; margin-left: 18px; }
.bat { width: 24px; height: 22px; margin-left: 13px; }
.kbd { width: 33px; height: 20px; margin-left: 12px; }
.time { width: 72px; padding-left: 18px; font-size: 18px; letter-spacing: -.4px; }
.note { width: 24px; height: 24px; margin-left: 18px; }
.edge { width: 1px; height: 46px; margin-left: 31px; background: #aaa; }
```
